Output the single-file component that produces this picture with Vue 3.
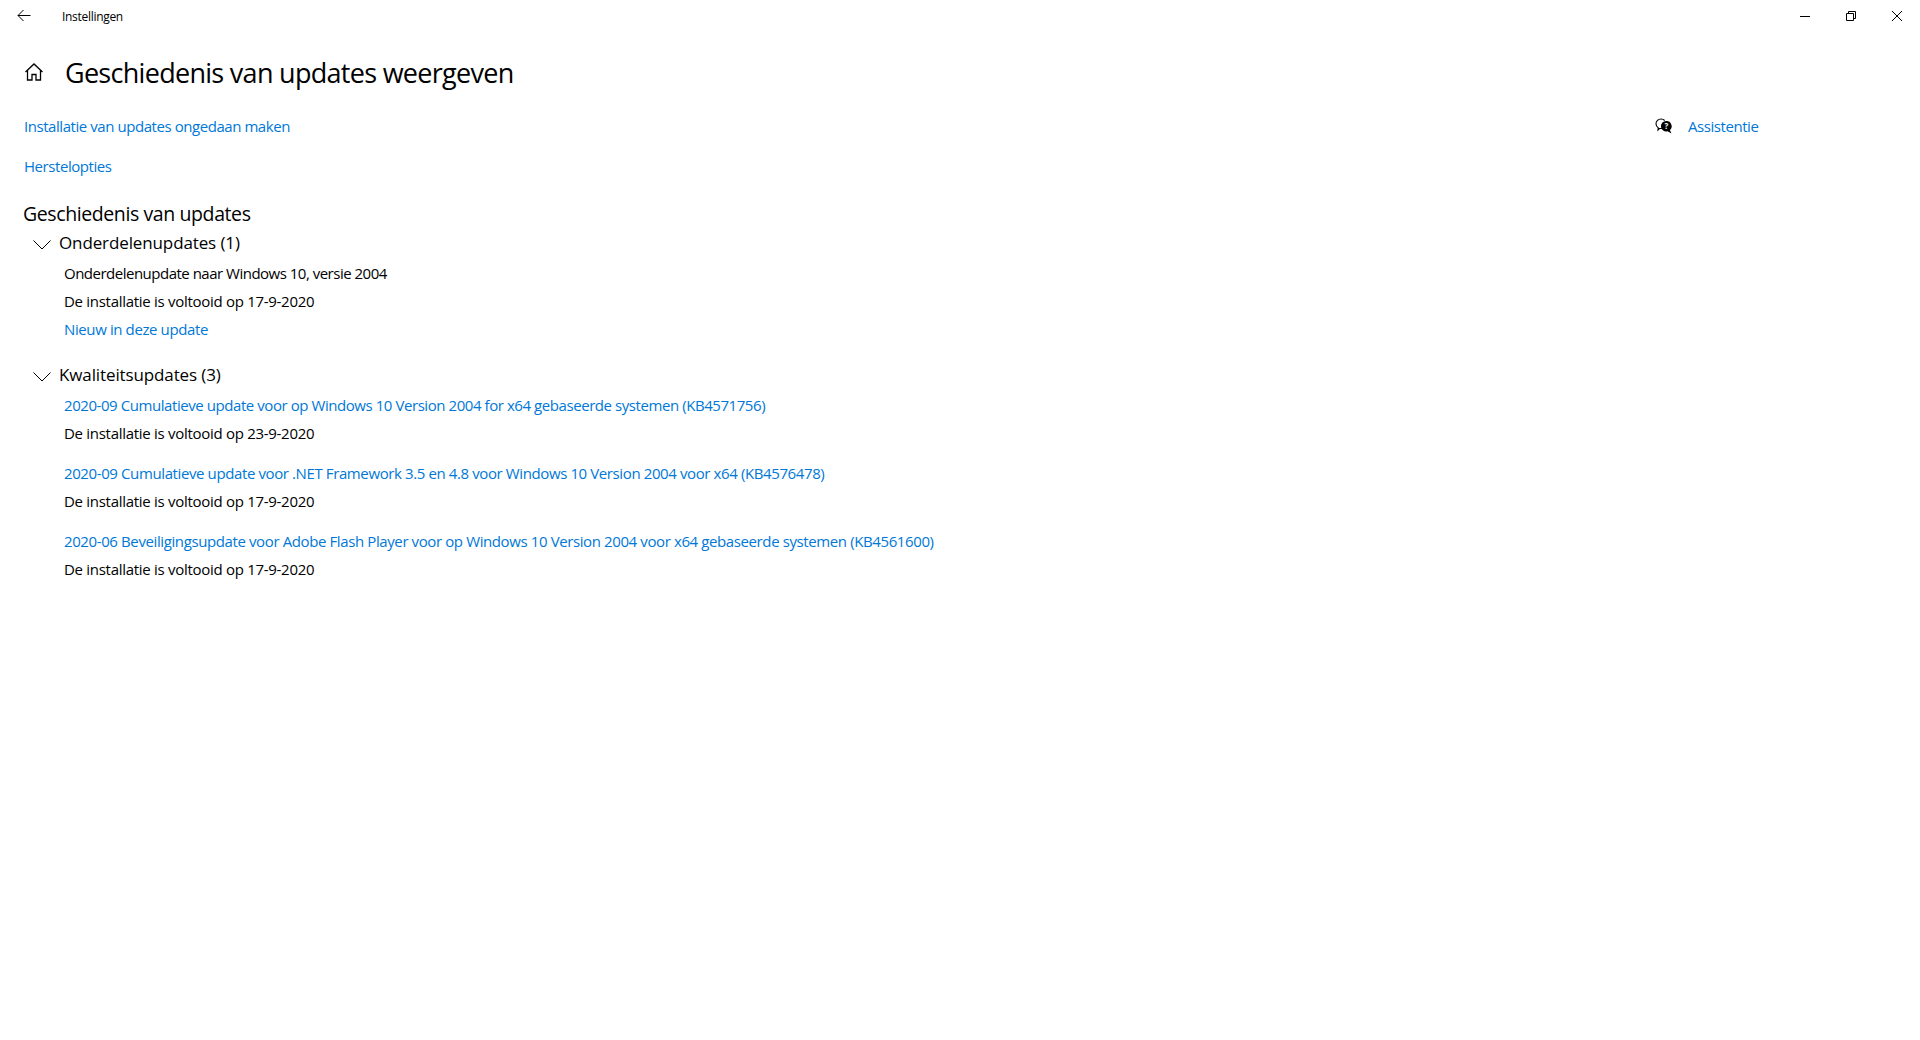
<template>
  <div class="window">
    <header class="titlebar">
      <div class="titlebar-left">
        <svg class="back-icon" width="16" height="16" viewBox="0 0 16 16">
          <path d="M14.5 7.5H2M7.5 2 2 7.5 7.5 13" fill="none" stroke="#000" stroke-width="1" />
        </svg>
        <span class="app-name">Instellingen</span>
      </div>
      <div class="window-controls">
        <svg width="12" height="12" viewBox="0 0 12 12">
          <path d="M1 6.5h10" stroke="#000" stroke-width="1" />
        </svg>
        <svg width="12" height="12" viewBox="0 0 12 12">
          <path d="M1.5 3.5h7v7h-7zM3.5 3.5v-2h7v7h-2" fill="none" stroke="#000" stroke-width="1" />
        </svg>
        <svg width="12" height="12" viewBox="0 0 12 12">
          <path d="M1 1l10 10M11 1 1 11" stroke="#000" stroke-width="1" />
        </svg>
      </div>
    </header>

    <div class="page-head">
      <svg class="home-icon" width="20" height="20" viewBox="0 0 20 20">
        <path d="M1.500 10 10 2l8.500 8M3.500 8.500V18H8v-5.500h4V18h4.500V8.500" fill="none" stroke="#000" stroke-width="1.300" />
      </svg>
      <h1 class="page-title">Geschiedenis van updates weergeven</h1>
    </div>

    <div class="columns">
      <main class="content">
        <div class="top-links">
          <a class="link">Installatie van updates ongedaan maken</a>
          <a class="link">Herstelopties</a>
        </div>

        <h2 class="section-title">Geschiedenis van updates</h2>

        <section v-for="group in groups" :key="group.title" class="group">
          <div class="group-head">
            <svg class="chevron" width="18" height="10" viewBox="0 0 18 10">
              <path d="M.5.5 9 9l8.500-8.500" fill="none" stroke="#000" stroke-width="1" />
            </svg>
            <h3 class="group-title">{{ group.title }}</h3>
          </div>
          <div v-for="item in group.items" :key="item.name" class="update">
            <a v-if="item.isLink" class="row link" :class="{ 'row-tight': item.tight }">{{ item.name }}</a>
            <div v-else class="row row-name">{{ item.name }}</div>
            <div class="row row-status">{{ item.status }}</div>
            <a v-if="item.more" class="row link">{{ item.more }}</a>
          </div>
        </section>
      </main>

      <aside class="help">
        <svg class="help-icon" width="18" height="18" viewBox="0 0 18 18">
          <path d="M7 11.500H4.500L3 13l.2-2.200C1.800 9.900 1 8.500 1 6.800 1 4.200 3.200 2 6 2c1.500 0 2.800.6 3.700 1.500" fill="none" stroke="#000" stroke-width="1.100" />
          <path d="M11.500 4a5.200 5.200 0 0 1 3.400 9.100l1.600 3.400-4-2.300A5.200 5.200 0 1 1 11.500 4z" fill="#000" />
          <text x="11.500" y="12.300" class="help-mark">?</text>
        </svg>
        <a class="link">Assistentie</a>
      </aside>
    </div>
  </div>
</template>

<script setup>
const groups = [
  {
    title: 'Onderdelenupdates (1)',
    items: [
      {
        name: 'Onderdelenupdate naar Windows 10, versie 2004',
        status: 'De installatie is voltooid op 17-9-2020',
        more: 'Nieuw in deze update'
      }
    ]
  },
  {
    title: 'Kwaliteitsupdates (3)',
    items: [
      {
        name: '2020-09 Cumulatieve update voor op Windows 10 Version 2004 for x64 gebaseerde systemen (KB4571756)',
        status: 'De installatie is voltooid op 23-9-2020',
        isLink: true,
        tight: true
      },
      {
        name: '2020-09 Cumulatieve update voor .NET Framework 3.5 en 4.8 voor Windows 10 Version 2004 voor x64 (KB4576478)',
        status: 'De installatie is voltooid op 17-9-2020',
        isLink: true
      },
      {
        name: '2020-06 Beveiligingsupdate voor Adobe Flash Player voor op Windows 10 Version 2004 voor x64 gebaseerde systemen (KB4561600)',
        status: 'De installatie is voltooid op 17-9-2020',
        isLink: true
      }
    ]
  }
]
</script>

<style>
html,
body {
  background: #fff;
}
</style>

<style scoped>
.window {
  height: 1040px;
  overflow: hidden;
  background: #fff;
  color: #000;
  font-family: "Open Sans", "Noto Sans", sans-serif;
  font-size: 14px;
}

.titlebar {
  display: flex;
  justify-content: space-between;
  align-items: center;
  height: 32px;
  padding: 0 17px 0 16px;
}

.titlebar-left {
  display: flex;
  align-items: center;
  gap: 30px;
}

.back-icon {
  margin-bottom: 1px;
}

.app-name {
  font-size: 12px;
  letter-spacing: -0.3px;
}

.window-controls {
  display: flex;
  gap: 34px;
  align-items: center;
}

.page-head {
  display: flex;
  align-items: center;
  gap: 21px;
  height: 40px;
  margin-top: 20px;
  padding-left: 24px;
}

.page-title {
  margin: 0;
  font-size: 27px;
  font-weight: 400;
  letter-spacing: -0.71px;
}

.columns {
  display: flex;
  justify-content: space-between;
}

.content {
  padding-left: 24px;
}

.top-links {
  display: flex;
  flex-direction: column;
  align-items: flex-start;
  gap: 20px;
  margin-top: 24px;
}

.link {
  color: #0078d7;
  cursor: pointer;
}

.top-links .link,
.help .link {
  line-height: 20px;
  font-size: 15px;
  letter-spacing: -0.44px;
}

.section-title {
  margin: 24px 0 0 -1px;
  font-size: 19.500px;
  font-weight: 400;
  line-height: 28px;
  letter-spacing: -0.4px;
}

.group {
  margin-bottom: 17px;
}

.group-head {
  display: flex;
  align-items: center;
  gap: 8px;
  height: 28px;
  margin: 0 0 3px 9px;
}

.chevron {
  margin-top: 6px;
}

.group-title {
  margin: 0;
  font-size: 17px;
  font-weight: 400;
  letter-spacing: -0.12px;
}

.update {
  margin-left: 40px;
  margin-bottom: 12px;
}

.row {
  display: block;
  height: 28px;
  line-height: 28px;
  font-size: 15px;
  letter-spacing: -0.39px;
  white-space: nowrap;
}

.row-tight {
  letter-spacing: -0.433px;
}

.row-name {
  letter-spacing: -0.5px;
}

.row-status {
  letter-spacing: -0.29px;
}

.help {
  display: flex;
  align-items: center;
  gap: 15px;
  width: 265px;
  height: 20px;
  margin-top: 24px;
}

.help-mark {
  fill: #fff;
  font-size: 8px;
  font-weight: 700;
  text-anchor: middle;
}
</style>
